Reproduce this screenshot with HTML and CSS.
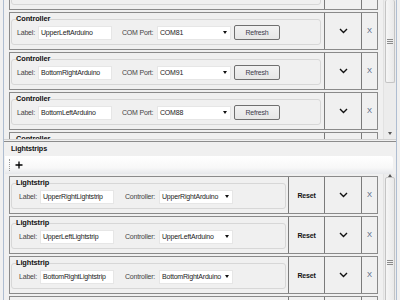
FILE: index.html
```html
<!DOCTYPE html>
<html lang="en">
<head>
  <meta charset="UTF-8">
  <title>Controllers and Lightstrips</title>
  <link rel="stylesheet" href="styles.css">
</head>
<body>
  <div class="frame">

    <div class="top">
      <div class="list">
        <div class="list-inner">
          <div class="row">
            <div class="cell-main">
              <fieldset class="group">
                <legend>Controller</legend>
                <div class="fields">
                  <span class="lbl lbl-label">Label:</span>
                  <span class="box">UpperRightArduino</span>
                  <span class="lbl lbl-com">COM Port:</span>
                  <span class="combo">COM80<i class="arrow"></i></span>
                  <button class="btn">Refresh</button>
                </div>
              </fieldset>
            </div>
            <div class="cell-chev"><svg width="9" height="6" viewBox="0 0 9 6"><path d="M1 1 L4.5 4.5 L8 1" fill="none" stroke="#111" stroke-width="1.4"/></svg></div>
            <div class="cell-x">X</div>
          </div>

          <div class="row">
            <div class="cell-main">
              <fieldset class="group">
                <legend>Controller</legend>
                <div class="fields">
                  <span class="lbl lbl-label">Label:</span>
                  <span class="box">UpperLeftArduino</span>
                  <span class="lbl lbl-com">COM Port:</span>
                  <span class="combo">COM81<i class="arrow"></i></span>
                  <button class="btn">Refresh</button>
                </div>
              </fieldset>
            </div>
            <div class="cell-chev"><svg width="9" height="6" viewBox="0 0 9 6"><path d="M1 1 L4.5 4.5 L8 1" fill="none" stroke="#111" stroke-width="1.4"/></svg></div>
            <div class="cell-x">X</div>
          </div>

          <div class="row">
            <div class="cell-main">
              <fieldset class="group">
                <legend>Controller</legend>
                <div class="fields">
                  <span class="lbl lbl-label">Label:</span>
                  <span class="box">BottomRightArduino</span>
                  <span class="lbl lbl-com">COM Port:</span>
                  <span class="combo">COM91<i class="arrow"></i></span>
                  <button class="btn">Refresh</button>
                </div>
              </fieldset>
            </div>
            <div class="cell-chev"><svg width="9" height="6" viewBox="0 0 9 6"><path d="M1 1 L4.5 4.5 L8 1" fill="none" stroke="#111" stroke-width="1.4"/></svg></div>
            <div class="cell-x">X</div>
          </div>

          <div class="row">
            <div class="cell-main">
              <fieldset class="group">
                <legend>Controller</legend>
                <div class="fields">
                  <span class="lbl lbl-label">Label:</span>
                  <span class="box">BottomLeftArduino</span>
                  <span class="lbl lbl-com">COM Port:</span>
                  <span class="combo">COM88<i class="arrow"></i></span>
                  <button class="btn">Refresh</button>
                </div>
              </fieldset>
            </div>
            <div class="cell-chev"><svg width="9" height="6" viewBox="0 0 9 6"><path d="M1 1 L4.5 4.5 L8 1" fill="none" stroke="#111" stroke-width="1.4"/></svg></div>
            <div class="cell-x">X</div>
          </div>

          <div class="row">
            <div class="cell-main">
              <fieldset class="group">
                <legend>Controller</legend>
                <div class="fields">
                  <span class="lbl lbl-label">Label:</span>
                  <span class="box">MiddleArduino</span>
                  <span class="lbl lbl-com">COM Port:</span>
                  <span class="combo">COM92<i class="arrow"></i></span>
                  <button class="btn">Refresh</button>
                </div>
              </fieldset>
            </div>
            <div class="cell-chev"><svg width="9" height="6" viewBox="0 0 9 6"><path d="M1 1 L4.5 4.5 L8 1" fill="none" stroke="#111" stroke-width="1.4"/></svg></div>
            <div class="cell-x">X</div>
          </div>
        </div>
      </div>
      <div class="scrollbar">
        <div class="thumb thumb-top"><span class="grip"></span></div>
        <div class="track-space"></div>
        <div class="sb-btn"><i class="sb-down"></i></div>
      </div>
    </div>

    <div class="strips">
      <div class="panel-title">Lightstrips</div>
      <div class="toolbar">
        <span class="tb-grip"></span>
        <svg class="tb-add" width="8" height="8" viewBox="0 0 8 8"><path d="M4 0.5 V7.5 M0.5 4 H7.5" stroke="#000" stroke-width="1.3"/></svg>
      </div>
      <div class="strips-body">
        <div class="list list-strips">
          <div class="row">
            <div class="cell-main">
              <fieldset class="group group-strip">
                <legend>Lightstrip</legend>
                <div class="fields">
                  <span class="lbl lbl-label">Label:</span>
                  <span class="box">UpperRightLightstrip</span>
                  <span class="lbl lbl-ctrl">Controller:</span>
                  <span class="combo">UpperRightArduino<i class="arrow"></i></span>
                </div>
              </fieldset>
            </div>
            <div class="cell-reset">Reset</div>
            <div class="cell-chev"><svg width="9" height="6" viewBox="0 0 9 6"><path d="M1 1 L4.5 4.5 L8 1" fill="none" stroke="#111" stroke-width="1.4"/></svg></div>
            <div class="cell-x">X</div>
          </div>

          <div class="row">
            <div class="cell-main">
              <fieldset class="group group-strip">
                <legend>Lightstrip</legend>
                <div class="fields">
                  <span class="lbl lbl-label">Label:</span>
                  <span class="box">UpperLeftLightstrip</span>
                  <span class="lbl lbl-ctrl">Controller:</span>
                  <span class="combo">UpperLeftArduino<i class="arrow"></i></span>
                </div>
              </fieldset>
            </div>
            <div class="cell-reset">Reset</div>
            <div class="cell-chev"><svg width="9" height="6" viewBox="0 0 9 6"><path d="M1 1 L4.5 4.5 L8 1" fill="none" stroke="#111" stroke-width="1.4"/></svg></div>
            <div class="cell-x">X</div>
          </div>

          <div class="row">
            <div class="cell-main">
              <fieldset class="group group-strip">
                <legend>Lightstrip</legend>
                <div class="fields">
                  <span class="lbl lbl-label">Label:</span>
                  <span class="box">BottomRightLightstrip</span>
                  <span class="lbl lbl-ctrl">Controller:</span>
                  <span class="combo">BottomRightArduino<i class="arrow"></i></span>
                </div>
              </fieldset>
            </div>
            <div class="cell-reset">Reset</div>
            <div class="cell-chev"><svg width="9" height="6" viewBox="0 0 9 6"><path d="M1 1 L4.5 4.5 L8 1" fill="none" stroke="#111" stroke-width="1.4"/></svg></div>
            <div class="cell-x">X</div>
          </div>

          <div class="row">
            <div class="cell-main">
              <fieldset class="group group-strip">
                <legend>Lightstrip</legend>
                <div class="fields">
                  <span class="lbl lbl-label">Label:</span>
                  <span class="box">BottomLeftLightstrip</span>
                  <span class="lbl lbl-ctrl">Controller:</span>
                  <span class="combo">BottomLeftArduino<i class="arrow"></i></span>
                </div>
              </fieldset>
            </div>
            <div class="cell-reset">Reset</div>
            <div class="cell-chev"><svg width="9" height="6" viewBox="0 0 9 6"><path d="M1 1 L4.5 4.5 L8 1" fill="none" stroke="#111" stroke-width="1.4"/></svg></div>
            <div class="cell-x">X</div>
          </div>
        </div>
        <div class="scrollbar">
          <div class="sb-btn sb-btn-up"><i class="sb-up"></i></div>
          <div class="thumb thumb-bottom"><span class="grip"></span></div>
        </div>
      </div>
    </div>

  </div>
</body>
</html>
```

FILE: styles.css
```css
body {
  margin: 0;
  background: #f0f0f0;
  font-family: "Liberation Sans", Arial, sans-serif;
  font-size: 7px;
  letter-spacing: -0.2px;
  color: #222;
}

.frame {
  margin: 0 3px;
  height: 300px;
  border-left: 1px solid #aebdd1;
  border-right: 1px solid #aebdd1;
  overflow: hidden;
}

/* controllers panel */
.top {
  display: flex;
  height: 140px;
  border-bottom: 1px solid #d2d2d2;
  box-sizing: border-box;
  overflow: hidden;
}

.list {
  flex: 1;
  padding: 0 5px;
  overflow: hidden;
}

.list-inner {
  margin-top: -28px;
}

.row {
  display: flex;
  height: 38px;
  margin-bottom: 2px;
  border: 1px solid #8a8a8a;
  box-sizing: border-box;
}

.cell-main {
  flex: 1;
  min-width: 0;
}

.cell-chev,
.cell-x,
.cell-reset {
  display: flex;
  align-items: center;
  justify-content: center;
  border-left: 1px solid #7a7a7a;
  box-sizing: border-box;
}

.cell-chev {
  width: 37px;
}

.cell-x {
  width: 16px;
  font-size: 7.5px;
  color: #4f5b7d;
  padding-bottom: 1px;
}

.cell-reset {
  width: 36px;
  font-weight: bold;
  font-size: 7px;
  color: #111;
}

.group {
  margin: 1px 3px 0 1px;
  padding: 0 4px 4px 4px;
  border: 1px solid #d7d7d7;
  border-radius: 3px;
  min-width: 0;
}

.group-strip {
  margin-right: 2px;
}

.group legend {
  padding: 0;
  margin-left: 0;
  font-weight: bold;
  font-size: 7.4px;
  letter-spacing: -0.1px;
  line-height: 10px;
  color: #111;
}

.fields {
  display: flex;
  align-items: center;
  padding: 1px 0 0 1px;
  height: 15px;
}

.group-strip .fields {
  padding-left: 3px;
}

.lbl {
  color: #444;
  white-space: nowrap;
}

.lbl-label {
  width: 21px;
}

.lbl-com {
  width: 35px;
  margin-left: 10px;
}

.lbl-ctrl {
  width: 34px;
  margin-left: 11px;
}

.box,
.combo {
  display: flex;
  align-items: center;
  height: 14px;
  width: 74px;
  box-sizing: border-box;
  padding-left: 2px;
  background: #fff;
  border: 1px solid #e6e6e6;
  white-space: nowrap;
  overflow: hidden;
  color: #222;
}

.combo {
  justify-content: space-between;
  padding-right: 3px;
}

.arrow {
  flex-shrink: 0;
  width: 0;
  height: 0;
  margin-left: 2px;
  border-left: 2.5px solid transparent;
  border-right: 2.5px solid transparent;
  border-top: 3px solid #111;
}

.btn {
  margin-left: 3px;
  width: 46px;
  height: 15px;
  padding: 0;
  border: 1px solid #6f6f6f;
  border-radius: 2px;
  background: linear-gradient(#f2f2f2, #e6e6e6);
  font-family: "Liberation Sans", Arial, sans-serif;
  font-size: 7px;
  letter-spacing: -0.2px;
  color: #3c3c4c;
}

/* scrollbars */
.scrollbar {
  display: flex;
  flex-direction: column;
  width: 13px;
  border-left: 1px solid #e2e2e2;
  background: #ececec;
  box-sizing: border-box;
  overflow: hidden;
}

.thumb {
  display: flex;
  align-items: center;
  justify-content: center;
  margin: 0 1px;
  border: 1px solid #c4c4c4;
  border-radius: 2px;
  background: linear-gradient(to right, #f6f6f6, #e9e9e9);
  flex-shrink: 0;
}

.thumb-top {
  height: 82px;
  border-top: none;
}

.thumb-bottom {
  height: 168px;
}

.grip {
  width: 6px;
  height: 5px;
  background: repeating-linear-gradient(#8b8b8b 0 1px, transparent 1px 2px);
}

.track-space {
  flex: 1;
}

.sb-btn {
  display: flex;
  align-items: center;
  justify-content: center;
  height: 12px;
}

.sb-btn-up {
  height: 11px;
}

.sb-down,
.sb-up {
  width: 0;
  height: 0;
  border-left: 2.5px solid transparent;
  border-right: 2.5px solid transparent;
}

.sb-down {
  border-top: 3px solid #555;
}

.sb-up {
  border-bottom: 3px solid #555;
}

/* lightstrips panel */
.strips {
  margin-top: 1px;
  border-top: 1px solid #8c8c8c;
}

.panel-title {
  height: 14px;
  padding-left: 7px;
  font-weight: bold;
  font-size: 7.2px;
  letter-spacing: -0.1px;
  line-height: 14px;
  color: #111;
  box-sizing: border-box;
}

.toolbar {
  display: flex;
  align-items: center;
  height: 18px;
  margin: 0 3px 0 1px;
  border-radius: 0 3px 3px 0;
  background: linear-gradient(#ffffff, #f8f8f8 65%, #e6e8eb);
}

.tb-grip {
  height: 12px;
  margin-left: 4px;
  border-left: 1px dotted #9a9a9a;
}

.tb-add {
  margin-left: 5px;
}

.strips-body {
  display: flex;
  height: 130px;
}

.list-strips {
  padding-top: 2px;
}
```
